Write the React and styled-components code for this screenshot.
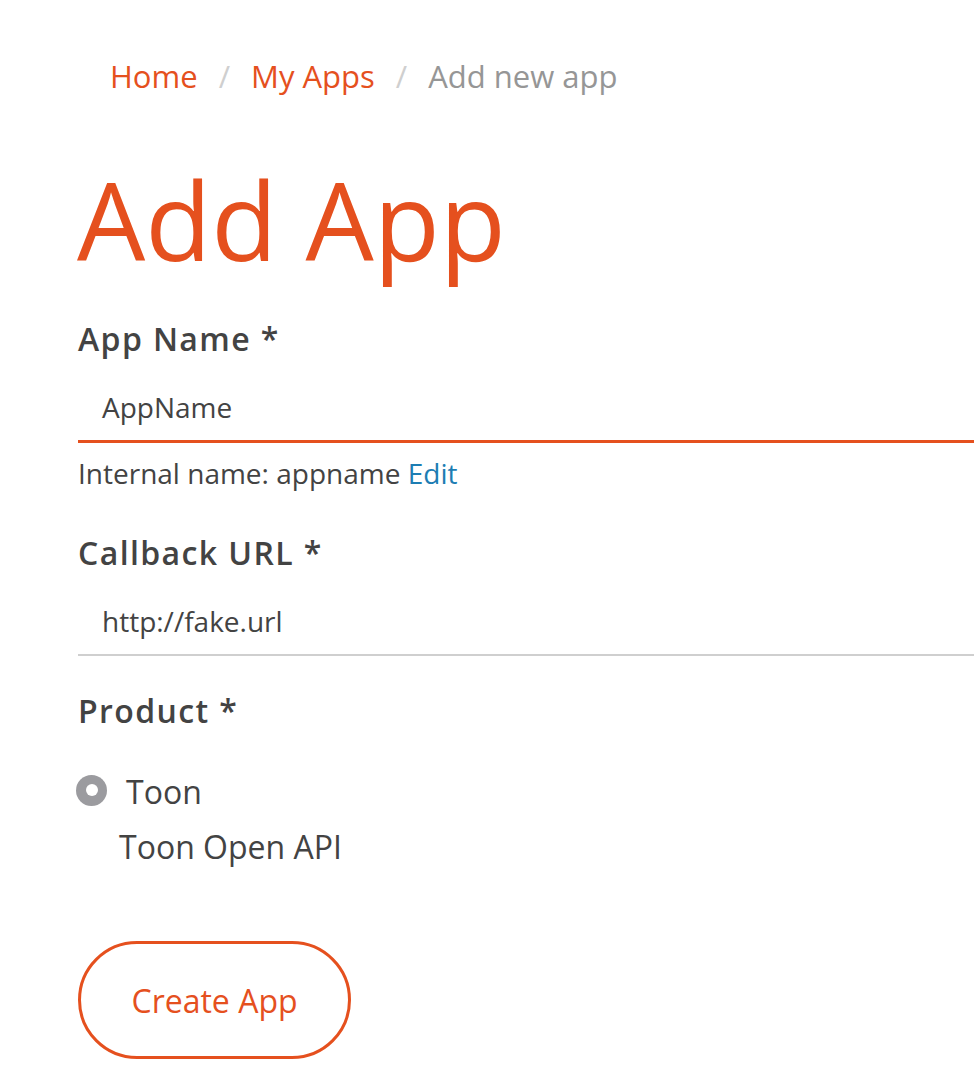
import React from "react";
import styled, { createGlobalStyle } from "styled-components";

const ORANGE = "#e5501e";
const TEXT = "#434343";

const GlobalStyle = createGlobalStyle`
  body {
    margin: 0;
    background: #fff;
    font-family: "Open Sans", "Liberation Sans", sans-serif;
    color: ${TEXT};
  }
`;

const Page = styled.div`
  padding: 0 0 0 78px;
  overflow: hidden;
`;

const Breadcrumb = styled.ol`
  display: flex;
  align-items: center;
  list-style: none;
  margin: 0;
  padding: 54px 0 0 32px;
  font-size: 31px;
  line-height: 44px;
`;

const Crumb = styled.li`
  color: ${({ $active }) => ($active ? "#969696" : ORANGE)};
  &:not(:first-child)::before {
    content: "/";
    color: #cfcfcf;
    padding: 0 21px;
  }
`;

const Title = styled.h1`
  margin: 47px 0 0 -1px;
  font-size: 108px;
  font-weight: 400;
  line-height: 150px;
  color: ${ORANGE};
`;

const Field = styled.div`
  display: flex;
  flex-direction: column;
  margin-top: ${({ $top }) => $top}px;
`;

const Label = styled.label`
  font-size: 32px;
  font-weight: 600;
  letter-spacing: 1.4px;
  line-height: 44px;
  color: ${TEXT};
`;

const Input = styled.div`
  margin-top: 13px;
  padding: 0 24px;
  height: 66px;
  display: flex;
  align-items: center;
  font-size: 28px;
  color: ${TEXT};
  border-bottom: ${({ $focused }) => ($focused ? `3px solid ${ORANGE}` : "2px solid #cfcfcf")};
`;

const Help = styled.div`
  margin-top: 10px;
  font-size: 28px;
  line-height: 40px;
  color: ${TEXT};
`;

const Link = styled.a`
  color: #1d7db3;
  text-decoration: none;
`;

const RadioRow = styled.div`
  display: flex;
  align-items: center;
  gap: 19px;
  margin-top: 37px;
  margin-left: -2px;
  font-size: 32px;
  line-height: 44px;
`;

const Radio = styled.span`
  width: 31px;
  height: 31px;
  border-radius: 50%;
  background: #9b9b9f;
  display: flex;
  align-items: center;
  justify-content: center;
  margin-top: -4px;
  &::after {
    content: "";
    width: 12px;
    height: 12px;
    border-radius: 50%;
    background: #fff;
  }
`;

const RadioDesc = styled.div`
  margin: 11px 0 0 41px;
  font-size: 32px;
  line-height: 44px;
`;

const Button = styled.button`
  margin-top: 72px;
  width: 273px;
  height: 118px;
  border: 3px solid ${ORANGE};
  border-radius: 59px;
  background: #fff;
  color: ${ORANGE};
  font-family: "Open Sans", "Liberation Sans", sans-serif;
  font-size: 32px;
  padding: 0;
  cursor: pointer;
`;

export default function App() {
  return (
    <Page>
      <GlobalStyle />
      <Breadcrumb>
        <Crumb>Home</Crumb>
        <Crumb>My Apps</Crumb>
        <Crumb $active>Add new app</Crumb>
      </Breadcrumb>
      <Title>Add App</Title>
      <Field $top={22}>
        <Label>App Name *</Label>
        <Input $focused>AppName</Input>
        <Help>
          Internal name: appname <Link href="#">Edit</Link>
        </Help>
      </Field>
      <Field $top={38}>
        <Label>Callback URL *</Label>
        <Input>http://fake.url</Input>
      </Field>
      <Field $top={33}>
        <Label>Product *</Label>
        <RadioRow>
          <Radio />
          <span>Toon</span>
        </RadioRow>
        <RadioDesc>Toon Open API</RadioDesc>
      </Field>
      <Button>Create App</Button>
    </Page>
  );
}
